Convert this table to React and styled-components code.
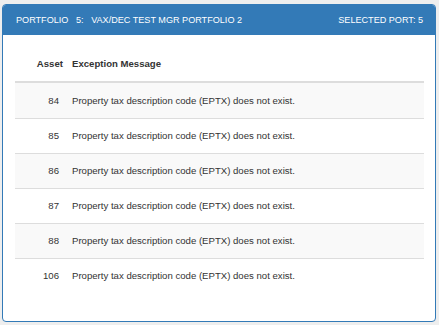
import React from "react";
import styled, { createGlobalStyle } from "styled-components";

const GlobalStyle = createGlobalStyle`
  html, body {
    margin: 0;
    padding: 0;
    background: #eeeeee;
  }
  body {
    font-family: "Liberation Sans", Arial, Helvetica, sans-serif;
    color: #333333;
  }
  *, *::before, *::after {
    box-sizing: border-box;
  }
`;

const Page = styled.div`
  padding: 4px 3px 3px 2px;
`;

const Panel = styled.section`
  background: #ffffff;
  border: 1px solid #337ab7;
  border-radius: 4px;
  overflow: hidden;
`;

const PanelHeading = styled.header`
  display: flex;
  justify-content: space-between;
  align-items: center;
  background: #337ab7;
  color: #ffffff;
  font-size: 9.1px;
  line-height: 14px;
  padding: 8px 12px 8px 13px;
  white-space: pre;
`;

const PanelBody = styled.div`
  padding: 12px 11px 28px 12px;
`;

const Table = styled.table`
  width: 100%;
  border-collapse: separate;
  border-spacing: 0;
  table-layout: fixed;
  font-size: 9.6px;
  line-height: 14px;
`;

const HeadCell = styled.th`
  text-align: ${(p) => (p.$align === "right" ? "right" : "left")};
  vertical-align: bottom;
  font-weight: bold;
  padding: 10px ${(p) => (p.$align === "right" ? "9px" : "8px")} 10px
    ${(p) => (p.$align === "right" ? "8px" : "0")};
  border-bottom: 2px solid #dddddd;
  width: ${(p) => p.$width || "auto"};
`;

const Row = styled.tr`
  background: ${(p) => (p.$striped ? "#f9f9f9" : "#ffffff")};

  &:first-child td {
    border-top: 0;
    padding-top: 11px;
  }
`;

const Cell = styled.td`
  text-align: ${(p) => (p.$align === "right" ? "right" : "left")};
  vertical-align: middle;
  padding: 10px ${(p) => (p.$align === "right" ? "13px" : "8px")} 10px
    ${(p) => (p.$align === "right" ? "8px" : "0")};
  border-top: 1px solid #dddddd;
`;

const exceptions = [
  { asset: 84, message: "Property tax description code (EPTX) does not exist." },
  { asset: 85, message: "Property tax description code (EPTX) does not exist." },
  { asset: 86, message: "Property tax description code (EPTX) does not exist." },
  { asset: 87, message: "Property tax description code (EPTX) does not exist." },
  { asset: 88, message: "Property tax description code (EPTX) does not exist." },
  { asset: 106, message: "Property tax description code (EPTX) does not exist." },
];

export default function App() {
  return (
    <>
      <GlobalStyle />
      <Page>
        <Panel>
          <PanelHeading>
            <span>{"PORTFOLIO\u00a0\u00a0 5:\u00a0\u00a0 VAX/DEC TEST MGR PORTFOLIO 2"}</span>
            <span>SELECTED PORT: 5</span>
          </PanelHeading>
          <PanelBody>
            <Table>
              <thead>
                <tr>
                  <HeadCell $align="right" $width="57px">Asset</HeadCell>
                  <HeadCell>Exception Message</HeadCell>
                </tr>
              </thead>
              <tbody>
                {exceptions.map((row, i) => (
                  <Row key={row.asset} $striped={i % 2 === 0}>
                    <Cell $align="right">{row.asset}</Cell>
                    <Cell>{row.message}</Cell>
                  </Row>
                ))}
              </tbody>
            </Table>
          </PanelBody>
        </Panel>
      </Page>
    </>
  );
}
